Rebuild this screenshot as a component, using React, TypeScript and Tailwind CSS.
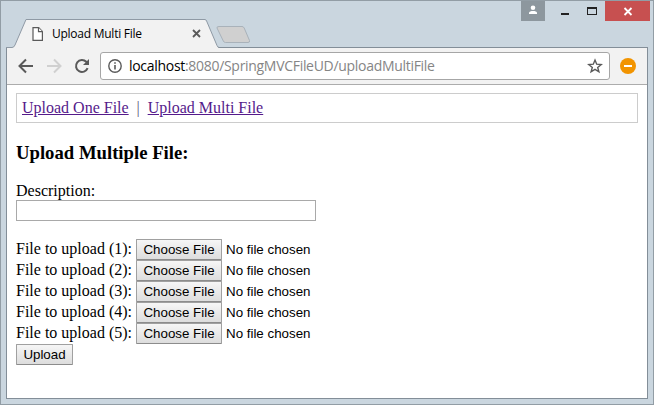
import React from "react";

const files = [1, 2, 3, 4, 5];

const buttonClass =
  "box-border h-[21px] shrink-0 whitespace-nowrap rounded-[1px] border border-[#a0a0a0] border-b-[#8c8c8c] bg-linear-to-b from-[#f6f6f6] to-[#dddddd] text-center font-['Liberation_Sans',Arial,sans-serif] text-[13.333px] leading-[19px] text-black";

function WindowControls() {
  return (
    <div className="ml-auto mr-[3px] flex h-5">
      <div className="flex w-6 justify-center bg-[#8d979e]">
        <svg width="24" height="20" viewBox="0 0 24 20" fill="#fff">
          <circle cx="12" cy="6.8" r="2.3" />
          <path d="M8 13v-1.500C8 9.400 16 9.400 16 11.500V13z" />
        </svg>
      </div>
      <svg width="60" height="20" viewBox="0 0 60 20">
        <path d="M16 12h8v2h-8z" fill="#222" />
        <path fillRule="evenodd" d="M42 6h10v8H42zM43 8v5h8V8z" fill="#222" />
      </svg>
      <div className="w-[45px] bg-[#c75050]">
        <svg width="45" height="20" viewBox="0 0 45 20">
          <path d="M19.5 7l7 7M26.5 7l-7 7" stroke="#fff" strokeWidth="1.8" />
        </svg>
      </div>
    </div>
  );
}

function Tab() {
  return (
    <div className="relative z-10 mt-[18px] h-[29px] w-[213px] shrink-0">
      <svg className="absolute left-0 top-0" width="213" height="29" viewBox="0 0 213 29">
        <path d="M0 29V28.5H5.5Q8 28.5 9 26L20 .5H199Q200 .5 200.6 2L211 26.5Q212 29 213 29z" fill="#f2f2f2" />
        <path d="M0 28.5H6Q8 28.5 9 26L20 .5H199Q200 .5 200.6 2L211 26.5Q212 28.5 213 28.5" fill="none" stroke="#8f9aa5" />
      </svg>
      <div className="relative flex h-[29px] items-center pl-[26px]">
        <svg width="12" height="14" viewBox="0 0 12 14" fill="#fff" stroke="#5a5a5a" strokeWidth="1.2">
          <path d="M1 .7h5.7L10.4 4.4v8.9H1z" />
          <path d="M6.5 .7v4h4" />
        </svg>
        <span className="ml-2 w-[145px] whitespace-nowrap font-['Open_Sans',sans-serif] text-[12px] leading-4 tracking-[-0.25px] text-black">
          Upload Multi File
        </span>
        <svg className="-ml-[5px]" width="9" height="9" viewBox="0 0 9 9" stroke="#5a5a5a" strokeWidth="1.8">
          <path d="M1 1l7 7M8 1L1 8" />
        </svg>
      </div>
    </div>
  );
}

function Toolbar() {
  return (
    <div className="flex h-[37px] shrink-0 items-center border-b border-[#acacac] bg-[#f2f2f2] pl-[11px]">
      <svg width="16" height="16" viewBox="0 0 16 16" fill="none" stroke="#5a5a5a" strokeWidth="2">
        <path d="M15 8H2.5M8 1.5L1.5 8 8 14.5" />
      </svg>
      <svg className="ml-3" width="16" height="16" viewBox="0 0 16 16" fill="none" stroke="#d0d0d0" strokeWidth="2">
        <path d="M1 8h12.5M8 1.5L14.500 8 8 14.500" />
      </svg>
      <svg className="ml-3" width="16" height="16" viewBox="0 0 16 16" fill="none" stroke="#5a5a5a" strokeWidth="2">
        <path d="M13.600 10.200A6 6 0 1 1 12.300 3.800L13.500 5" />
        <path d="M15 1v6H9z" fill="#5a5a5a" stroke="none" />
      </svg>
      <div className="ml-[10px] flex h-7 w-[510px] items-center rounded-[3px] border border-[#a6a6a6] bg-white pl-[7px]">
        <svg width="14" height="14" viewBox="0 0 14 14" fill="none" stroke="#5a5a5a">
          <circle cx="7" cy="7" r="6.2" strokeWidth="1.4" />
          <path d="M7 6v4.500M7 3.300v1.500" strokeWidth="1.600" />
        </svg>
        <span className="ml-[7px] whitespace-nowrap font-['Open_Sans',sans-serif] text-[14px] leading-5 tracking-[-0.3px] text-[#858585]">
          <span className="text-black">localhost</span>:8080/SpringMVCFileUD/uploadMultiFile
        </span>
        <svg className="ml-auto mr-[6px]" width="16" height="16" viewBox="0 0 16 16" fill="none" stroke="#5a5a5a" strokeWidth="1.400">
          <path d="M8 2l1.700 4.200 4.500.300-3.500 2.900 1.200 4.400L8 11.400l-3.900 2.400 1.200-4.400-3.500-2.900 4.500-.300z" />
        </svg>
      </div>
      <svg className="ml-[10px]" width="16" height="16" viewBox="0 0 16 16">
        <circle cx="8" cy="8" r="8" fill="#f29400" />
        <path d="M4 7h8v2H4z" fill="#fff" />
      </svg>
    </div>
  );
}

function Page() {
  return (
    <main className="flex flex-1 flex-col bg-white px-[9px] pt-2 font-['Liberation_Serif','Times_New_Roman',serif] text-[16px] leading-[18px] text-black">
      <nav className="flex h-[30px] w-[622px] items-center whitespace-pre border border-[#ccc] px-[5px]">
        <a className="text-[#551a8b] underline" href="#one">Upload One File</a>
        <span className="w-[19px] text-center text-[#5b5b78]">|</span>
        <a className="text-[#551a8b] underline" href="#multi">Upload Multi File</a>
      </nav>
      <h3 className="mt-[19px] text-[18.720px] font-bold leading-[21px]">Upload Multiple File:</h3>
      <label className="mt-[19px] block leading-[18px]" htmlFor="description">Description:</label>
      <input id="description" className="block h-[21px] w-[300px] border border-[#a9a9a9] bg-white px-1 outline-none" />
      <div className="mt-[18px]">
        {files.map((n) => (
          <div key={n} className="flex h-[21px] items-start">
            <span className="mt-px w-[120px] whitespace-nowrap">File to upload ({n}):</span>
            <button type="button" className={`${buttonClass} w-[86px]`}>Choose File</button>
            <span className="ml-1 whitespace-nowrap font-['Liberation_Sans',Arial,sans-serif] text-[13.333px] leading-[21px]">No file chosen</span>
          </div>
        ))}
      </div>
      <button type="button" className={`${buttonClass} w-[57px]`}>Upload</button>
    </main>
  );
}

export default function App() {
  return (
    <div className="flex h-[405px] w-[654px] flex-col overflow-hidden border border-[#929da5] bg-[#cad6df]">
      <header className="flex h-[46px] shrink-0 items-start pl-[5px]">
        <Tab />
        <svg className="ml-[-3px] mt-[24px]" width="36" height="19" viewBox="0 0 36 19">
          <path d="M3 1.500H26Q27.500 1.500 28.200 3L33.500 15.500Q34 17.500 32 17.500H9.500Q8 17.500 7.300 16L1 3Q.500 1.500 3 1.500z" fill="#d0d0d0" stroke="#a9b2ba" />
        </svg>
        <WindowControls />
      </header>
      <section className="ml-[5px] flex h-[352px] w-[642px] shrink-0 flex-col border border-[#838e98]">
        <Toolbar />
        <Page />
      </section>
    </div>
  );
}
